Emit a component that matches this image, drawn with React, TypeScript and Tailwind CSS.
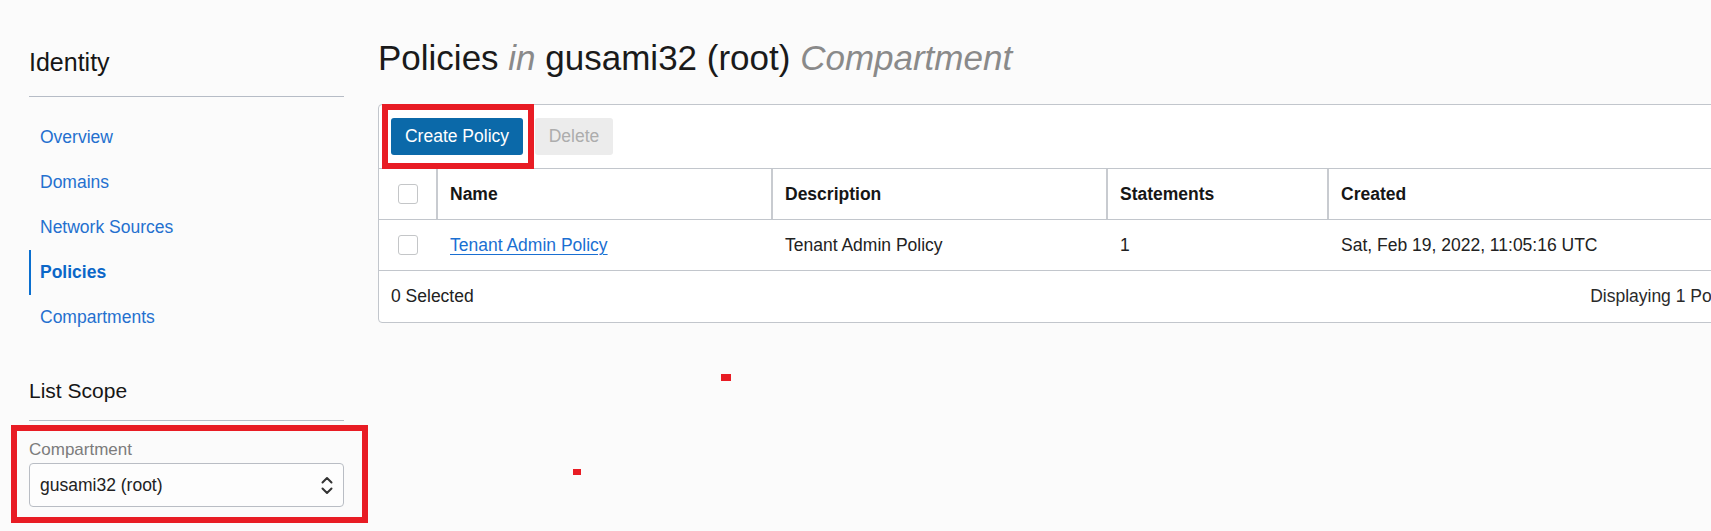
import React from "react";

const navItems = ["Overview", "Domains", "Network Sources", "Policies", "Compartments"];

function Checkbox() {
  return <div className="h-[20px] w-[20px] rounded-[3px] border border-[#c4c6c8] bg-white" />;
}

function UpDownIcon() {
  return (
    <svg width="12" height="19" viewBox="0 0 12 19" fill="none" stroke="#333" strokeWidth="2" strokeLinecap="round" strokeLinejoin="round">
      <path d="M1.5 6.5 L6 2 L10.5 6.5" />
      <path d="M1.5 12.5 L6 17 L10.5 12.5" />
    </svg>
  );
}

export default function App() {
  return (
    <div className="relative flex h-[531px] w-[1711px] overflow-hidden bg-[#fbfbfb] font-['Liberation_Sans',Arial,sans-serif] text-[#1f1f1f]">
      {/* Sidebar */}
      <aside className="w-[378px] flex-none pl-[29px] pr-[34px] pt-[47px]">
        <h2 className="text-[25px] leading-[30px] text-[#161616]">Identity</h2>
        <div className="mt-[19px] border-t border-[#b6bcc6]" />

        <nav className="mt-[18px] flex flex-col">
          {navItems.map((item) =>
            item === "Policies" ? (
              <div key={item} className="h-[45px] border-l-2 border-[#0b6fcf] pl-[9px] text-[17.5px] font-bold leading-[45px] text-[#0b67c8]">
                {item}
              </div>
            ) : (
              <div key={item} className="h-[45px] border-l-2 border-transparent pl-[9px] text-[17.5px] leading-[45px] text-[#2470cf]">
                {item}
              </div>
            )
          )}
        </nav>

        <h3 className="mt-[38px] text-[21px] leading-[26px] text-[#161616]">List Scope</h3>
        <div className="mt-[16px] border-t border-[#b6bcc6]" />

        {/* Compartment picker */}
        <div className="relative mt-[19px]">
          <label className="block text-[17px] leading-[20px] text-[#7c7c7c]">Compartment</label>
          <div className="mt-[3px] flex h-[44px] items-center justify-between rounded-[4px] border border-[#b9bdc4] bg-[#fdfdfd] pl-[10px] pr-[10px]">
            <span className="text-[17.5px] text-[#222]">gusami32 (root)</span>
            <UpDownIcon />
          </div>
          <div className="pointer-events-none absolute -bottom-[16px] -left-[18px] -right-[24px] -top-[15px] border-[6px] border-[#e81c24]" />
        </div>
      </aside>

      {/* Main */}
      <main className="flex-none pt-[38px]">
        <h1 className="whitespace-nowrap text-[35px] leading-[40px] text-[#1a1a1a]">
          Policies <i className="text-[#8a8a8a]">in</i> gusami32 (root) <i className="text-[#8a8a8a]">Compartment</i>
        </h1>

        <div className="mt-[26px] w-[1372px] rounded-[4px] border border-[#c2c6cc] bg-white">
          {/* Toolbar */}
          <div className="flex gap-[12px] px-[12px] py-[13px]">
            <div className="relative">
              <button className="h-[37px] w-[132px] rounded-[3px] bg-[#0b69a9] text-[17.5px] text-white">Create Policy</button>
              <div className="pointer-events-none absolute -bottom-[14px] -left-[9px] -right-[11px] -top-[14px] z-10 border-[6px] border-[#e81c24]" />
            </div>
            <button className="h-[37px] w-[78px] rounded-[3px] bg-[#ececec] text-[17.5px] text-[#adadad]">Delete</button>
          </div>

          {/* Header row */}
          <div className="flex h-[51px] border-t border-[#c2c6cc] text-[17.5px] font-bold text-[#161616]">
            <div className="flex w-[59px] flex-none items-center justify-center border-r-2 border-[#c8cbd0]">
              <Checkbox />
            </div>
            <div className="flex w-[335px] flex-none items-center border-r-2 border-[#c8cbd0] pl-[12px]">Name</div>
            <div className="flex w-[335px] flex-none items-center border-r-2 border-[#c8cbd0] pl-[12px]">Description</div>
            <div className="flex w-[221px] flex-none items-center border-r-2 border-[#c8cbd0] pl-[12px]">Statements</div>
            <div className="flex flex-1 items-center pl-[12px]">Created</div>
          </div>

          {/* Data row */}
          <div className="flex h-[51px] border-t border-[#c2c6cc] text-[17.5px] text-[#222]">
            <div className="flex w-[59px] flex-none items-center justify-center pr-[2px]">
              <Checkbox />
            </div>
            <div className="flex w-[335px] flex-none items-center pl-[12px]">
              <a className="text-[#1a6fd2] underline underline-offset-[3px]">Tenant Admin Policy</a>
            </div>
            <div className="flex w-[335px] flex-none items-center pl-[12px]">Tenant Admin Policy</div>
            <div className="flex w-[221px] flex-none items-center pl-[12px]">1</div>
            <div className="flex flex-1 items-center pl-[12px]">Sat, Feb 19, 2022, 11:05:16 UTC</div>
          </div>

          {/* Footer */}
          <div className="flex h-[52px] items-center justify-between border-t border-[#c2c6cc] px-[12px] text-[17.5px] text-[#222]">
            <span>0 Selected</span>
            <span className="text-[#2a2a2a]">Displaying 1 Policy</span>
          </div>
        </div>
      </main>

      {/* stray annotation marks */}
      <div className="absolute left-[721px] top-[374px] h-[7px] w-[10px] bg-[#e81c24]" />
      <div className="absolute left-[573px] top-[469px] h-[6px] w-[8px] bg-[#e81c24]" />
    </div>
  );
}
